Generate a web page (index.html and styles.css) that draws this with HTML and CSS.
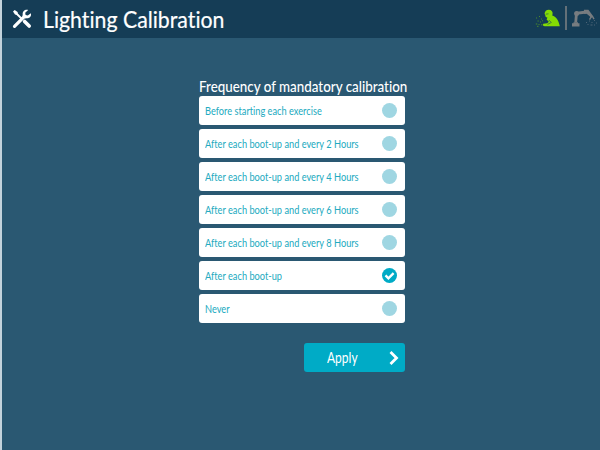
FILE: index.html
```html
<!DOCTYPE html>
<html lang="en">
<head>
    <meta charset="UTF-8">
    <meta name="viewport" content="width=device-width, initial-scale=1.0">
    <title>Lighting Calibration</title>
    <link rel="stylesheet" href="styles.css">
</head>
<body>
    <!-- Top bar -->
    <header class="topbar">
        <svg class="tools-icon" viewBox="0 0 20 20">
            <path d="M2.5 17.3 12 7.8" stroke="#fff" stroke-width="3.2" stroke-linecap="round"/>
            <path d="M18.8 4.2 15.8 6.6 13.6 6 13.2 3.8 16.2 1C13 .2 10.4 2.3 10.7 5.3L10.5 7 13 9.4 14.8 9.2C17.7 9.4 19.8 7 18.8 4.2Z" fill="#fff"/>
            <path d="M1 2.6 2.7 1 5.6 3 5.9 4.6 10.5 9.2 9.1 10.6 4.5 6 3 5.6Z" fill="#fff"/>
            <path d="M12.6 12.4 17.2 17" stroke="#fff" stroke-width="3.6" stroke-linecap="round"/>
        </svg>
        <h1 class="title"><span>Lighting Calibration</span></h1>
        <svg class="worker-icon" viewBox="0 0 26 20">
            <path d="M9.6 4.9C9.6 2.2 11.5.7 13.8.7 16.3.7 17.9 2.5 17.6 5L17.2 6.5C20.9 7.6 23.8 11.3 24.8 17.3H9.5L7.9 16.5 8.2 14.8 12.3 14.3 13.8 12.8 11.6 10.6 12.4 8.4C10.6 8.3 10.3 7.1 10.3 5.9Z" fill="#84dc04"/>
            <path d="M10.8 5.2 13.5 4.8M13.8 11 16.3 13.5 12.5 15.4" stroke="#174360" stroke-width=".6" fill="none"/>
            <path d="M1 9h1M4 7.5h1M6 10h1M2.5 12h1.2M5 13h1M.8 15h1.5M3.5 15.5h1M6 15.8h1.5M2 17.3h1.5M7 11.8h1" stroke="#4b8a2c" stroke-width="1"/>
        </svg>
        <div class="divider"></div>
        <svg class="robot-icon" viewBox="0 0 26 20">
            <path d="M0 17.5v-3.3h1.5v-1h4.5v1h1.5v3.3Z" fill="#777c80"/>
            <path d="M3.7 13.5 4.5 4.3 14.5 3" stroke="#777c80" stroke-width="2.8" fill="none"/>
            <circle cx="4.6" cy="4.6" r="2.5" fill="#777c80"/>
            <path d="M12 .8h4.4l4.8 6.4-1.9 1.5-4.6-3.9H12Z" fill="#777c80"/>
            <path d="m19.5 7.4-2 3.3M20.3 7.2l1.7 2.9" stroke="#777c80" stroke-width="1.4"/>
            <path d="M14 13.5h1M17 12h1M19.5 13.5h1M22 11.5h1M24 14h1M15.5 15.5h1M18.5 16h2M22 16h1" stroke="#4d6476"/>
        </svg>
    </header>

    <main class="panel">
        <h2 class="heading"><span>Frequency of mandatory calibration</span></h2>
        <ul class="options">
            <li class="option"><span class="label">Before starting each exercise</span><i class="dot"></i></li>
            <li class="option"><span class="label">After each boot-up and every 2 Hours</span><i class="dot"></i></li>
            <li class="option"><span class="label">After each boot-up and every 4 Hours</span><i class="dot"></i></li>
            <li class="option"><span class="label">After each boot-up and every 6 Hours</span><i class="dot"></i></li>
            <li class="option"><span class="label">After each boot-up and every 8 Hours</span><i class="dot"></i></li>
            <li class="option">
                <span class="label">After each boot-up</span>
                <i class="dot checked">
                    <svg viewBox="0 0 15 15"><path d="m3.5 7.4 2.9 2.9 5.2-5.2" stroke="#fff" stroke-width="2.4" fill="none"/></svg>
                </i>
            </li>
            <li class="option"><span class="label">Never</span><i class="dot"></i></li>
        </ul>
        <button class="apply">
            <span class="apply-text">Apply</span>
            <svg class="chevron" viewBox="0 0 10 16"><path d="m1.5 2 6 6-6 6" stroke="#fff" stroke-width="2.8" fill="none"/></svg>
        </button>
    </main>
</body>
</html>
```
FILE: styles.css
```css
* {
    margin: 0;
    padding: 0;
    box-sizing: border-box;
}
html, body {
    width: 100%;
    height: 100%;
    overflow: hidden;
}
body {
    background-color: #2a5872;
    border-left: 2px solid #c3d3dc;
    font-family: "Lato", "Open Sans", sans-serif;
    font-variant-ligatures: none;
    color: #fff;
}
.topbar {
    display: flex;
    align-items: center;
    height: 38px;
    padding: 0 2px 0 10px;
    background-color: #153d56;
}
.tools-icon {
    width: 20px;
    height: 20px;
}
.title {
    flex: 1;
    margin-left: 11px;
    font-size: 23px;
    font-weight: 400;
    line-height: 36px;
    white-space: nowrap;
    -webkit-text-stroke: 0.2px #fff;
}
/* Condensed text */
.title span, .heading span, .label, .apply-text {
    display: inline-block;
    transform: scaleX(0.84);
    transform-origin: left center;
}
.title span {
    transform: scaleX(0.925);
}
.heading span {
    transform: scaleX(0.892);
}
.worker-icon, .robot-icon {
    width: 26px;
    height: 20px;
}
.divider {
    width: 2px;
    height: 24px;
    margin: 0 5px 2px 4px;
    background-color: #637078;
}
.panel {
    width: 206px;
    margin: 39px 0 0 197px;
}
.heading {
    height: 19px;
    font-size: 15px;
    font-weight: 500;
    line-height: 19px;
    white-space: nowrap;
}
.options {
    display: flex;
    flex-direction: column;
    gap: 4px;
    list-style: none;
}
.option {
    display: flex;
    align-items: center;
    justify-content: space-between;
    height: 29px;
    padding: 0 8px 0 6px;
    border-radius: 3px;
    background-color: #fff;
    color: #22aac0;
    font-size: 11px;
    white-space: nowrap;
}
.label {
    min-width: 0;
}
.dot {
    flex: none;
    width: 15px;
    height: 15px;
    border-radius: 50%;
    background-color: #9fd6e2;
}
.dot.checked {
    background-color: #00abc6;
}
.dot svg {
    display: block;
}
.apply {
    display: flex;
    align-items: center;
    justify-content: space-between;
    width: 101px;
    height: 29px;
    margin: 20px 0 0 105px;
    padding: 0 6px 2px 23px;
    border: none;
    border-radius: 3px;
    background-color: #00abc6;
    color: #fff;
    font-family: inherit;
    font-size: 15px;
}
.apply-text {
    transform: scaleX(0.8);
}
.chevron {
    width: 10px;
    height: 16px;
    margin-top: 2px;
}
```
